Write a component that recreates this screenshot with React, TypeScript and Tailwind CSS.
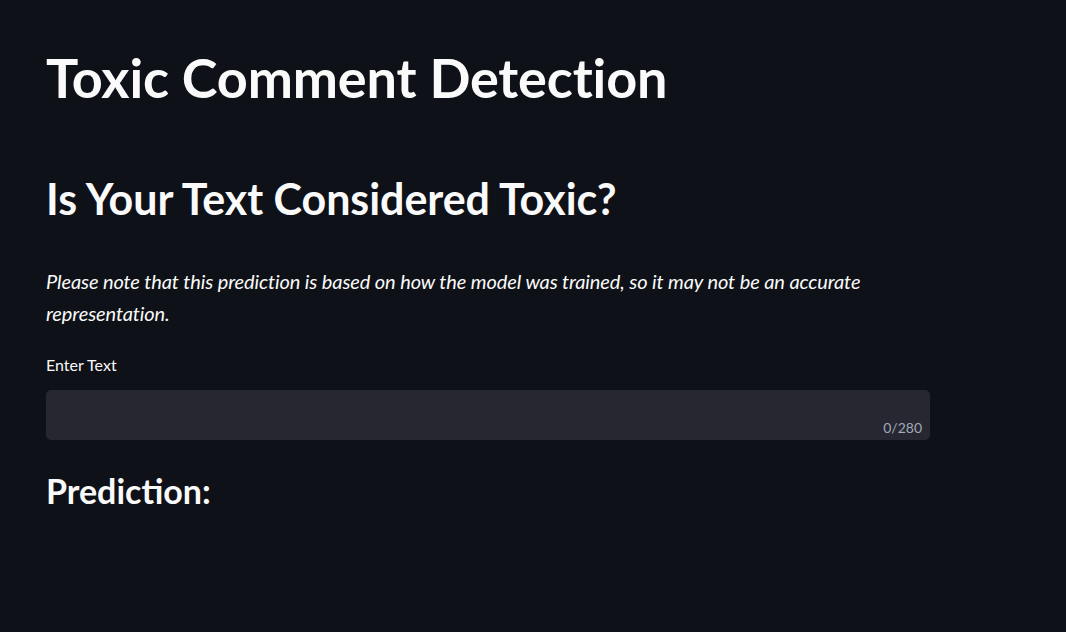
import React from 'react';

const App = () => {
  return (
    <div className="min-h-[632px] w-full bg-[#0e1117] text-[#fafafa] font-['Source_Sans_Pro','Lato',sans-serif]">
      <div className="w-[884px] ml-[46px] pt-[52px]">
        <h1 className="text-[54px] font-bold leading-[52px] tracking-[-0.15px]">Toxic Comment Detection</h1>

        <h2 className="mt-[71px] text-[43px] font-bold leading-[48px] tracking-[-0.05px]">
          Is Your Text Considered Toxic?
        </h2>

        <p className="mt-[42px] text-[20px] italic leading-[32px] tracking-[-0.1px]">
          Please note that this prediction is based on how the model was trained, so it may not be an accurate
          representation.
        </p>

        <label className="block mt-[25px] text-[16px] leading-[22px]">Enter Text</label>
        <div className="mt-[14px] h-[50px] rounded-[5px] bg-[#262730] flex items-end justify-end px-2 pb-[3px]">
          <span className="text-[14px] text-[#a3a8b8] leading-[18px]">0/280</span>
        </div>

        <h3 className="mt-[31px] text-[34px] font-bold leading-[40px]">Prediction:</h3>
      </div>
    </div>
  );
};

export default App;
